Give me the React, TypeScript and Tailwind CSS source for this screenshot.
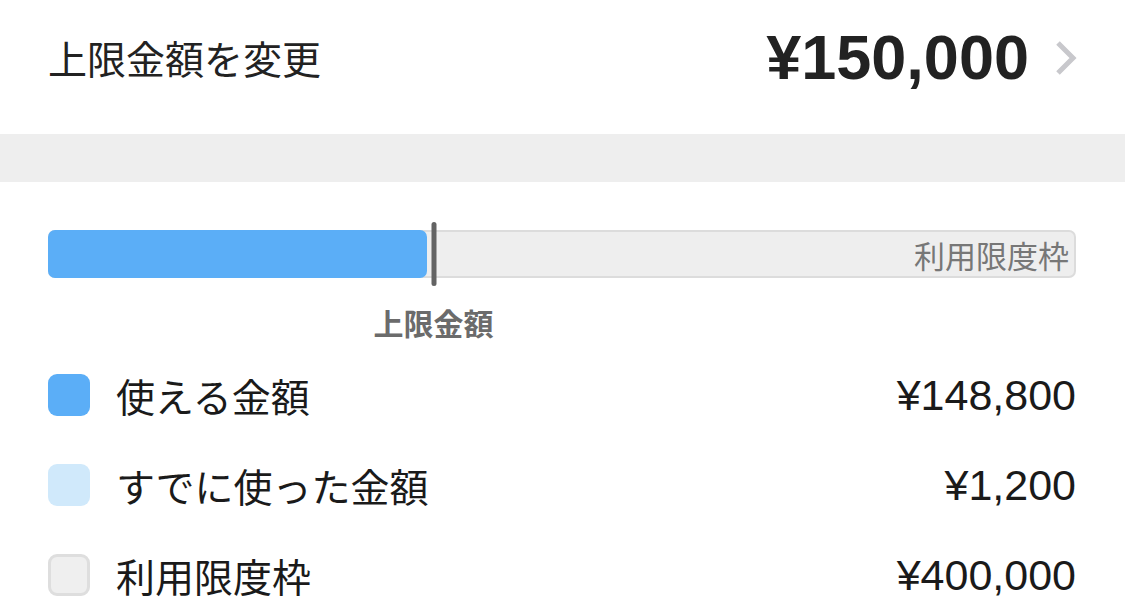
import React from 'react';

const LIMIT = 150000;
const MAX = 400000;

const jp = "font-['Noto_Sans_CJK_JP',sans-serif]";
const num = "font-['Liberation_Sans',Arial,sans-serif]";

type Legend = { label: string; amount: string; swatch: string };

const legends: Legend[] = [
  { label: '使える金額', amount: '¥148,800', swatch: 'bg-[#5baef7]' },
  { label: 'すでに使った金額', amount: '¥1,200', swatch: 'bg-[#d0e9fb]' },
  { label: '利用限度枠', amount: '¥400,000', swatch: 'bg-[#efefef] border-[3px] border-[#dedede]' },
];

const Chevron: React.FC = () => (
  <svg width="22" height="36" viewBox="0 0 22 36" fill="none">
    <path d="M3 3 L18 18 L3 33" stroke="#c8c8cc" strokeWidth="5" />
  </svg>
);

const App: React.FC = () => {
  const pct = (LIMIT / MAX) * 100;

  return (
    <div className="w-[1125px] h-[616px] overflow-hidden bg-white">
      {/* 上限金額の行 */}
      <div className="h-[134px] pl-[48px] pr-[48px] pb-[19px] flex items-center justify-between">
        <span className={`${jp} text-[39px] leading-none text-[#222]`}>上限金額を変更</span>
        <div className="flex items-center gap-[26px]">
          <span className={`${num} text-[63px] font-bold leading-none text-[#222]`}>¥150,000</span>
          <Chevron />
        </div>
      </div>

      <div className="h-[48px] bg-[#eeeeee]" />

      {/* 利用状況バー */}
      <div className="pl-[48px] pr-[49px] pt-[48px]">
        <div className="relative h-[48px] rounded-[7px] border-[2px] border-[#dcdcdc] bg-[#eeeeee] flex items-center justify-end pr-[5px]">
          <div
            className="absolute top-[-2px] bottom-[-2px] left-[-2px] rounded-[7px] bg-[#5baef7]"
            style={{ width: `calc(${pct}% - 5px)` }}
          />
          <div
            className="absolute top-[-10px] h-[64px] w-[5px] -translate-x-1/2 rounded-full bg-[#636363]"
            style={{ left: `${pct}%` }}
          />
          <span className={`${jp} text-[31px] leading-none text-[#777]`}>利用限度枠</span>
        </div>
        <div className="relative h-[72px]">
          <span
            className={`${jp} absolute top-[26px] -translate-x-1/2 whitespace-nowrap text-[30px] font-bold leading-[36px] text-[#6b6b6b]`}
            style={{ left: `${pct}%` }}
          >
            上限金額
          </span>
        </div>

        {/* 凡例 */}
        <ul>
          {legends.map((l) => (
            <li key={l.label} className="h-[90px] flex items-center">
              <span className={`w-[42px] h-[42px] rounded-[9px] shrink-0 ${l.swatch}`} />
              <span className={`${jp} ml-[26px] text-[39px] leading-none text-[#1a1a1a]`}>{l.label}</span>
              <span className={`${num} ml-auto text-[43px] leading-none text-[#1a1a1a]`}>{l.amount}</span>
            </li>
          ))}
        </ul>
      </div>
    </div>
  );
};

export default App;
